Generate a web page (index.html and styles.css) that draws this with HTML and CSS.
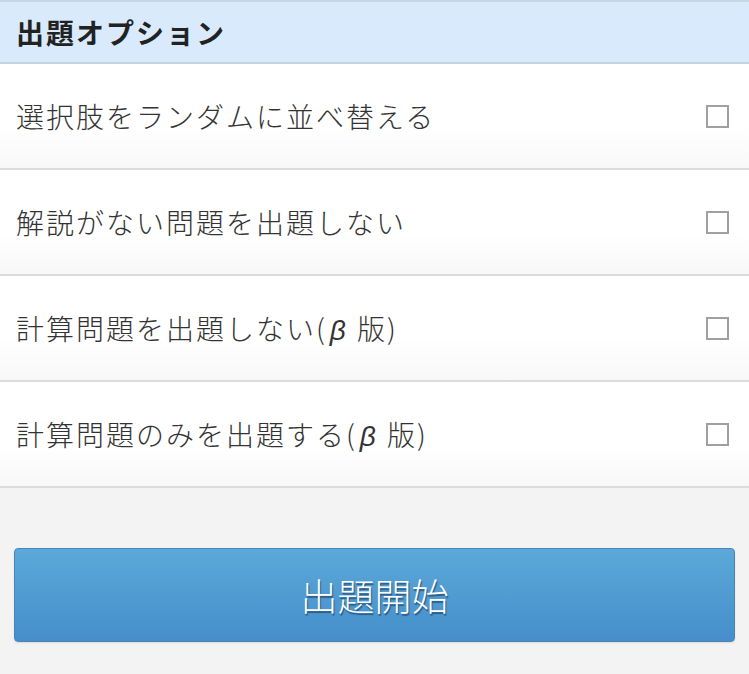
FILE: index.html
```
<!DOCTYPE html>
<html lang="ja">
<head>
<meta charset="utf-8">
<link rel="stylesheet" href="styles.css">
</head>
<body>
<div class="page">
  <div class="header">出題オプション</div>
  <ul class="options">
    <li class="option"><span class="label">選択肢をランダムに並べ替える</span><span class="check"></span></li>
    <li class="option"><span class="label">解説がない問題を出題しない</span><span class="check"></span></li>
    <li class="option"><span class="label">計算問題を出題しない(<span class="beta">β</span> 版)</span><span class="check"></span></li>
    <li class="option"><span class="label">計算問題のみを出題する(<span class="beta">β</span> 版)</span><span class="check"></span></li>
  </ul>
  <div class="actions">
    <button class="start">出題開始</button>
  </div>
</div>
</body>
</html>
```
FILE: styles.css
```
html, body {
  margin: 0;
  padding: 0;
  background: #f3f3f3;
}
body {
  font-family: "Noto Sans CJK JP", "Noto Sans", sans-serif;
  color: #333;
}
.page {
  width: 749px;
  height: 674px;
  overflow: hidden;
}
.header {
  border-top: 2px solid #c9d6e3;
  height: 60px;
  background: #d8eafc;
  border-bottom: 2px solid #c3d3e3;
  font-weight: bold;
  font-size: 28px;
  letter-spacing: 2px;
  color: #222;
  padding-left: 16px;
  display: flex;
  align-items: center;
}
.options {
  list-style: none;
  margin: 0;
  padding: 0;
}
.option {
  height: 104px;
  border-bottom: 2px solid #dcdcdc;
  background: linear-gradient(#ffffff, #ffffff 60%, #f8f8f8);
  display: flex;
  align-items: center;
  justify-content: space-between;
  padding: 0 20px 0 16px;
}
.label {
  font-size: 28px;
  font-weight: 300;
  letter-spacing: 2px;
  color: #333;
}
.beta {
  font-family: "Liberation Sans", sans-serif;
  font-style: italic;
  letter-spacing: 0;
  padding: 0 3px 0 3px;
}
.check {
  width: 19px;
  height: 19px;
  border: 2px solid #a0a0a0;
  background: #fff;
}
.actions {
  padding: 60px 14px 0 14px;
}
.start {
  display: block;
  width: 721px;
  height: 94px;
  border: 1px solid #4a85b5;
  border-radius: 4px;
  background: linear-gradient(#5ba9d9, #458ecb);
  color: #fff;
  font-family: "Noto Sans CJK JP", "Noto Sans", sans-serif;
  font-size: 37px;
  font-weight: 300;
  text-shadow: 1px 2px 1px #2d5a80;
  box-shadow: 0 1px 2px rgba(0,0,0,0.1);
}
```
